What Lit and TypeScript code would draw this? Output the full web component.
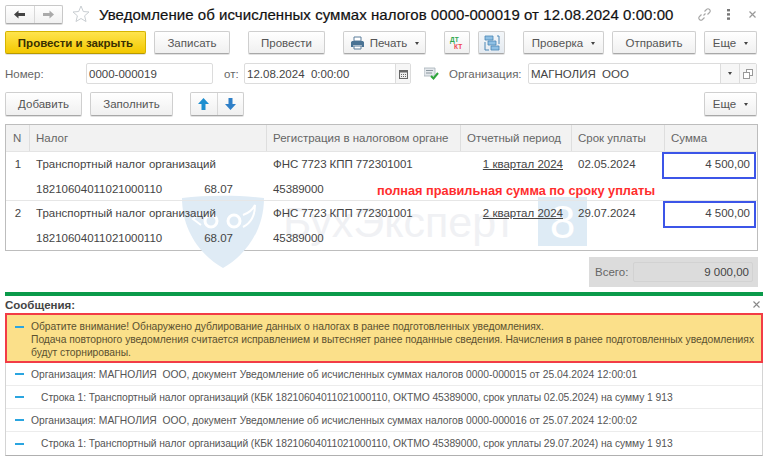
import { LitElement, html, css } from "lit";
import { customElement } from "lit/decorators.js";

const rows = [
  { n: "1", period: "1 квартал 2024", date: "02.05.2024" },
  { n: "2", period: "2 квартал 2024", date: "29.07.2024" },
];
const msgs = [
  { t: "Организация: МАГНОЛИЯ  ООО, документ Уведомление об исчисленных суммах налогов 0000-000015 от 25.04.2024 12:00:01", sub: false },
  { t: "Строка 1: Транспортный налог организаций (КБК 18210604011021000110, ОКТМО 45389000, срок уплаты 02.05.2024) на сумму 1 913", sub: true },
  { t: "Организация: МАГНОЛИЯ  ООО, документ Уведомление об исчисленных суммах налогов 0000-000016 от 25.07.2024 12:00:02", sub: false },
  { t: "Строка 1: Транспортный налог организаций (КБК 18210604011021000110, ОКТМО 45389000, срок уплаты 29.07.2024) на сумму 1 913", sub: true },
];

const caret = html`<span class="caret"></span>`;

@customElement("app-root")
export class AppRoot extends LitElement {
  static styles = css`
    :host { display: block; width: 768px; height: 461px; overflow: hidden; background: #fff;
      font-family: "Liberation Sans", Arial, sans-serif; font-size: 11.5px; color: #4a4a4a; }
    * { box-sizing: border-box; }
    .page { padding: 4px 5px 0 5px; display: flex; flex-direction: column; }
    .titlebar { display: flex; align-items: center; height: 20px; width: 752px; }
    .nav { flex: none; display: flex; width: 58px; height: 19px; border: 1px solid #c8c8c8; border-bottom-color: #aaa; border-radius: 2px;
      background: linear-gradient(#fff, #f1f1f1); box-shadow: 0 1px 0 #ddd; }
    .nav div { flex: 1; display: flex; align-items: center; justify-content: center; }
    .nav div + div { border-left: 1px solid #d8d8d8; }
    .star { margin-left: 9px; flex: none; }
    h1 { margin: 0 0 0 9px; font-size: 15px; font-weight: 400; color: #111; white-space: nowrap; -webkit-text-stroke: 0.2px #111; letter-spacing: 0.05px; flex: 1; }
    .winicons { flex: none; display: flex; align-items: center; }
    .bar { display: flex; align-items: center; width: 752px; }
    .tools { margin-top: 7px; height: 23px; }
    .btn { flex: none; height: 23px; border: 1px solid #cfcfcf; border-bottom-color: #a8a8a8; border-radius: 2px; background: linear-gradient(#fff, #f0f0f0);
      box-shadow: 0 1px 0 #e2e2e2; display: flex; align-items: center; justify-content: center; gap: 5px; color: #555; white-space: nowrap; }
    .primary { background: linear-gradient(#ffe44d, #f3c800); border-color: #d6b400; border-bottom-color: #b89a00; color: #3a3000; font-weight: 700; }
    .caret { width: 0; height: 0; border-left: 2.5px solid transparent; border-right: 2.5px solid transparent; border-top: 3px solid #444; margin-left: 3px; margin-top: 1px; }
    .form { margin-top: 9px; height: 21px; }
    .lbl { flex: none; color: #666; white-space: nowrap; }
    .input { flex: none; height: 21px; border: 1px solid #dcdcdc; border-radius: 2px; background: #fff; color: #444; display: flex; align-items: center; padding-left: 2px; }
    .input.split { justify-content: space-between; padding-right: 0; }
    .input span { white-space: pre; }
    .addon { height: 100%; display: flex; align-items: center; justify-content: center; border-left: 1px solid #dcdcdc; background: #f6f6f6; flex: none; }
    .actions { margin-top: 8px; height: 24px; }
    .actions .btn { height: 24px; }
    .arrows { display: flex; width: 54px; padding: 0; gap: 0; }
    .arrows div { flex: 1; height: 100%; display: flex; align-items: center; justify-content: center; }
    .arrows div + div { border-left: 1px solid #d8d8d8; }
    .push { margin-left: auto; }
    .table { position: relative; margin-top: 8px; width: 753px; height: 127px; border: 1px solid #bdbdbd; }
    .cols { display: grid; grid-template-columns: 23px 237px 194px 111px 93px 1fr; }
    .head { height: 27px; background: #f2f2f2; color: #666; border-bottom: 1px solid #e4e4e4; }
    .head div { display: flex; align-items: center; padding-left: 6px; border-left: 1px solid #dedede; white-space: nowrap; }
    .head div:first-child { border-left: 0; padding-left: 7px; }
    .row { height: 49px; grid-template-rows: 24px 25px; border-bottom: 1px solid #e6e6e6; position: relative; }
    .row.last { border-bottom: 0; }
    .row > div { display: flex; align-items: center; position: relative; z-index: 1; color: #444; white-space: nowrap; }
    .num { justify-content: center; padding-left: 1px; }
    .tax { padding-left: 7px; }
    .kbk { padding-left: 7px; justify-content: space-between; padding-right: 33px; }
    .reg { padding-left: 7px; letter-spacing: -0.08px; }
    .per { justify-content: flex-end; padding-right: 8px; text-decoration: underline; }
    .dat { padding-left: 7px; }
    .sum { justify-content: flex-end; padding-right: 7px; }
    .sumbox { position: absolute; border: 2px solid #3c55e8; z-index: 2; pointer-events: none; }
    .sb1 { left: 656px; top: 27px; width: 94px; height: 27px; }
    .sb2 { left: 657px; top: 76px; width: 93px; height: 27px; }
    .note { position: absolute; left: 371px; top: 58px; color: #ff2d2d; font-weight: 700; font-size: 12.75px; white-space: nowrap; z-index: 3; }
    .wm { position: absolute; z-index: 0; pointer-events: none; }
    .wm-shield { left: 175px; top: 70px; }
    .wm-text { left: 277px; top: 66px; font-size: 43px; color: #f0f1f4; white-space: nowrap; line-height: 62px; }
    .wm-eight { left: 532px; top: 72px; width: 49px; height: 49px; background: #deebf5; color: #fff; font-size: 46px; display: flex; align-items: center; justify-content: center; }
    .total { margin: 6px 0 0 584px; width: 169px; height: 30px; background: #dcdcdc; display: flex; align-items: center; padding: 0 5px 0 6px; color: #666; }
    .total .t { flex: none; width: 38px; }
    .total .val { flex: 1; height: 20px; border: 1px solid #d2d2d2; border-radius: 2px; display: flex; align-items: center; justify-content: flex-end; padding-right: 3px; color: #444; }
    .green { margin-top: 5px; width: 758px; height: 4px; background: #0a9a4a; }
    .msghead { height: 17px; width: 758px; display: flex; align-items: center; justify-content: space-between; padding-right: 3px; font-weight: 700; color: #444; }
    .alert { width: 758px; height: 50px; border: 2px solid #f23c46; background: #fbe08a; display: grid; grid-template-columns: 24px 1fr; padding-top: 5px; color: #5a5030; font-size: 10.3px; line-height: 13px; letter-spacing: -0.02px; }
    .alert p { margin: 0; white-space: pre-line; }
    .dash { width: 9px; height: 2px; background: #2aa5e0; margin: 6px 0 0 8px; }
    .list { width: 758px; border: 1px solid #d4d4d4; border-top: 0; border-bottom: 1px solid #b0b0b0; }
    .msg { height: 23px; display: grid; grid-template-columns: 25px 1fr; align-items: center; border-bottom: 1px solid #ececec; font-size: 10.3px; color: #555; white-space: pre; }
    .msg:last-child { border-bottom: 0; }
    .msg .dash { margin: 0 0 0 9px; }
    .msg.sub span { padding-left: 10px; letter-spacing: -0.06px; }
  `;

  render() {
    return html`<div class="page">
      <div class="titlebar">
        <div class="nav">
          <div><svg width="11" height="9" viewBox="0 0 11 9"><path d="M0 4.500 4.500 .5V3H11V6H4.500V8.500Z" fill="#444"/></svg></div>
          <div><svg width="11" height="9" viewBox="0 0 11 9"><path d="M11 4.500 6.500 .5V3H0V6H6.500V8.500Z" fill="#aaa"/></svg></div>
        </div>
        <svg class="star" width="18" height="18" viewBox="0 0 18 18"><path d="M9 1l2.300 5.500 5.700.5-4.400 3.800 1.400 5.700L9 13.500 4 16.500l1.400-5.700L1 7l5.700-.5Z" fill="none" stroke="#c9ced2"/></svg>
        <h1>Уведомление об исчисленных суммах налогов 0000-000019 от 12.08.2024 0:00:00</h1>
        <div class="winicons">
          <svg style="margin-right:16px" width="13" height="13" viewBox="0 0 13 13" fill="none" stroke="#a8a8a8" stroke-width="1.100"><path d="M5.500 7.500 7.500 5.500M6.500 3.500 8.500 1.500a2 2 0 0 1 3 3L9.500 6.500M3.500 6.500 1.500 8.500a2 2 0 0 0 3 3L6.500 9.500"/></svg>
          <svg style="margin-right:19px" width="3" height="11" viewBox="0 0 3 11" fill="#777"><rect y="0" width="3" height="2.400"/><rect y="4.200" width="3" height="2.400"/><rect y="8.400" width="3" height="2.400"/></svg>
          <svg style="margin-right:1px" width="7" height="7" viewBox="0 0 7 7" stroke="#999" stroke-width="1.200"><path d="M.5.5l6 6M6.500.5l-6 6"/></svg>
        </div>
      </div>

      <div class="bar tools">
        <div class="btn primary" style="width:141px">Провести и закрыть</div>
        <div class="btn" style="width:76px;margin-left:8px">Записать</div>
        <div class="btn" style="width:77px;margin-left:18px">Провести</div>
        <div class="btn" style="width:83px;margin-left:18px">
          <svg width="15" height="14" viewBox="0 0 15 14"><path d="M4 1h7v4H4Z" fill="#fff" stroke="#5d7f9c"/><path d="M1 6.500C1 5.500 2 5 3 5h9c1 0 2 .5 2 1.500V11h-2.500V9h-8v2H1Z" fill="#4a7394"/><path d="M4 10h7v3H4Z" fill="#fff" stroke="#5d7f9c"/></svg>
          Печать ${caret}
        </div>
        <div class="btn" style="width:26px;margin-left:18px">
          <svg width="16" height="14" viewBox="0 0 16 14"><text x="1" y="6" font-size="6.500" font-weight="700" fill="#2fa84f" font-family="Liberation Sans">ДТ</text><text x="5" y="13" font-size="6.500" font-weight="700" fill="#f0444c" font-family="Liberation Sans">КТ</text></svg>
        </div>
        <div class="btn" style="width:27px;margin-left:8px;background:linear-gradient(#f4f7fa,#e4eaf0)">
          <svg width="16" height="16" viewBox="0 0 16 16"><path d="M1 1h8v4H1ZM4 6h8v4H4ZM7 11h8v4H7Z" fill="#8fc0e4" stroke="#4a86b4" stroke-width=".8"/><path d="M13 1h2v8M1 7v8h4" fill="none" stroke="#4a86b4"/></svg>
        </div>
        <div class="btn" style="width:81px;margin-left:18px">Проверка ${caret}</div>
        <div class="btn" style="width:84px;margin-left:8px">Отправить</div>
        <div class="btn" style="width:53px;margin-left:8px">Еще ${caret}</div>
      </div>

      <div class="bar form">
        <span class="lbl" style="width:81px">Номер:</span>
        <div class="input" style="width:127px">0000-000019</div>
        <span class="lbl" style="margin-left:11px;width:20px">от:</span>
        <div class="input split" style="width:167px"><span>12.08.2024  0:00:00</span><div class="addon" style="width:15px">
            <svg width="9" height="10" viewBox="0 0 9 10"><path d="M0 1h9v9H0Z" fill="#666"/><path d="M1 3.500h7V9H1Z" fill="#eee"/><path d="M2 5h1v1H2ZM4 5h1v1H4ZM6 5h1v1H6ZM2 7h1v1H2ZM4 7h1v1H4ZM6 7h1v1H6Z" fill="#666"/></svg>
          </div></div>
        <svg style="margin-left:13px;flex:none" width="15" height="13" viewBox="0 0 15 13"><path d="M0 1h11v8H0Z" fill="#e4e8ec" stroke="#a5b0b8" stroke-width=".8"/><path d="M2 3.500h7M2 6h6" stroke="#8a969e"/><path d="M7 9l2.500 2.500L14 6" fill="none" stroke="#2fa53c" stroke-width="2"/></svg>
        <span class="lbl" style="margin-left:10px;width:79px">Организация:</span>
        <div class="input split" style="width:229px"><span>МАГНОЛИЯ  ООО</span><div style="display:flex;height:100%">
            <div class="addon" style="width:19px"><span class="caret" style="margin:0"></span></div>
            <div class="addon" style="width:17px">
              <svg width="10" height="10" viewBox="0 0 10 10" fill="#fff" stroke="#999"><rect x="3.500" y=".5" width="6" height="6"/><rect x=".5" y="3.500" width="6" height="6"/></svg>
            </div>
          </div></div>
      </div>

      <div class="bar actions">
        <div class="btn" style="width:77px">Добавить</div>
        <div class="btn" style="width:83px;margin-left:8px">Заполнить</div>
        <div class="btn arrows" style="margin-left:17px">
          <div><svg width="11" height="12" viewBox="0 0 11 12"><path d="M5.500 0 11 6H7.500V12H3.500V6H0Z" fill="#1e8fd0"/></svg></div>
          <div><svg width="11" height="12" viewBox="0 0 11 12"><path d="M5.500 12 11 6H7.500V0H3.500V6H0Z" fill="#2f80c8"/></svg></div>
        </div>
        <div class="btn push" style="width:53px">Еще ${caret}</div>
      </div>

      <div class="table">
        <div class="wm wm-text">БухЭксперт</div>
        <div class="wm wm-eight">8</div>
        <svg class="wm wm-shield" width="84" height="74" viewBox="0 0 84 74">
          <path d="M1 3C25 0 58 0 83 3 83 35 65 60 42 73 19 60 1 35 1 3Z" fill="#dfebf5"/>
          <circle cx="30" cy="26" r="6" fill="none" stroke="#fff" stroke-width="3"/>
          <circle cx="53" cy="26" r="6" fill="none" stroke="#fff" stroke-width="3"/>
          <path d="M20 18 12 24 20 30M62 20C68 18 72 14 74 10 74 20 70 28 62 32" fill="none" stroke="#fff" stroke-width="2"/>
        </svg>
        <div class="cols head">
          <div>N</div><div>Налог</div><div>Регистрация в налоговом органе</div><div>Отчетный период</div><div>Срок уплаты</div><div>Сумма</div>
        </div>
        ${rows.map((r, i) => html`
          <div class="cols row ${i === 1 ? "last" : ""}">
            <div class="num">${r.n}</div>
            <div class="tax">Транспортный налог организаций</div>
            <div class="reg">ФНС 7723 КПП 772301001</div>
            <div class="per">${r.period}</div>
            <div class="dat">${r.date}</div>
            <div class="sum">4 500,00</div>
            <div></div>
            <div class="kbk"><span>18210604011021000110</span><span>68.07</span></div>
            <div class="reg">45389000</div>
            <div></div><div></div><div></div>
          </div>`)}
        <div class="sumbox sb1"></div>
        <div class="sumbox sb2"></div>
        <div class="note">полная правильная сумма по сроку уплаты</div>
      </div>

      <div class="total"><span class="t">Всего:</span><div class="val">9 000,00</div></div>
      <div class="green"></div>
      <div class="msghead"><span>Сообщения:</span>
        <svg width="7" height="7" viewBox="0 0 7 7" stroke="#888" stroke-width="1.100"><path d="M.5.5l6 6M6.500.5l-6 6"/></svg>
      </div>
      <div class="alert">
        <div class="dash"></div>
        <p>Обратите внимание! Обнаружено дублирование данных о налогах в ранее подготовленных уведомлениях.
Подача повторного уведомления считается исправлением и вытесняет ранее поданные сведения. Начисления в ранее подготовленных уведомлениях
будут сторнированы.</p>
      </div>
      <div class="list">
        ${msgs.map((m) => html`<div class="msg ${m.sub ? "sub" : ""}"><div class="dash"></div><span>${m.t}</span></div>`)}
      </div>
    </div>`;
  }
}
